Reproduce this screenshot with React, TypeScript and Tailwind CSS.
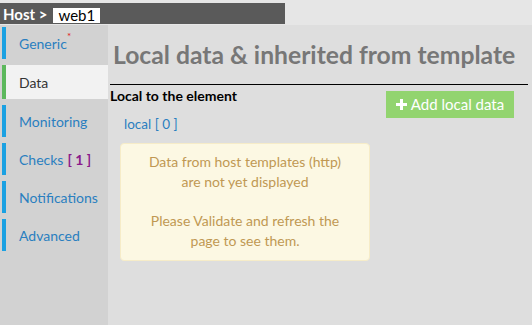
const items = [
  { label: 'Generic', star: true },
  { label: 'Data', active: true },
  { label: 'Monitoring' },
  { label: 'Checks', count: '[ 1 ]' },
  { label: 'Notifications' },
  { label: 'Advanced' },
];

export default function App() {
  return (
    <div className="w-[532px] h-[325px] overflow-hidden bg-[#dedede] font-['Lato',sans-serif] text-[14px] flex flex-col">
      {/* Top bar */}
      <div className="h-[25px] bg-[#e6e6e6] pt-[3px] flex">
        <div className="w-[285px] h-[21px] bg-[#5a5a5a] flex items-end pl-[3px] gap-[6px]">
          <span className="text-white font-bold text-[15px] leading-[20px]">Host &gt;</span>
          <span className="bg-white text-black px-[5px] h-[15px] leading-[15px] text-[15px] mb-[1px]">web1</span>
        </div>
      </div>

      <div className="flex flex-1">
        {/* Sidebar */}
        <div className="w-[108px] bg-[#d2d2d2] pt-[2px] flex flex-col gap-[6px]">
          {items.map((it) => (
            <div
              key={it.label}
              className={
                it.active
                  ? 'h-[34px] ml-[2px] bg-[#f2f2f2] border-l-[4px] border-[#5cb85c] flex items-center pl-[13px] text-[#333]'
                  : 'h-[32px] ml-[2px] border-l-[4px] border-[#1ba1e2] flex items-center pl-[13px] text-[#2a7fc0]'
              }
            >
              {it.label}
              {it.star && <sup className="text-[#e02020] text-[10px] -translate-y-[2px]">*</sup>}
              {it.count && <span className="ml-[4px] font-bold text-[#8a1a8a]">{it.count}</span>}
            </div>
          ))}
        </div>

        {/* Main */}
        <div className="flex-1 pl-[2px] pr-[4px]">
          <h1 className="text-[24.7px] font-bold text-[#777] leading-[30px] pl-[3px] mt-[15px]">
            Local data &amp; inherited from template
          </h1>
          <div className="border-t border-black mt-[14px] flex justify-between">
            <div>
              <div className="font-bold text-black leading-[18px] mt-[2px]">Local to the element</div>
              <div className="text-[#2a7fc0] text-[13.5px] pl-[14px] mt-[9px]">local [ 0 ]</div>
            </div>
            <button className="bg-[#92d46f] text-white text-[15px] w-[128px] h-[27px] mt-[6px] mr-[14px] flex items-center justify-center gap-[4px]">
              <svg width="11" height="11" viewBox="0 0 11 11">
                <path d="M4 0h3v4h4v3H7v4H4V7H0V4h4z" fill="white" />
              </svg>
              Add local data
            </button>
          </div>
          <div className="ml-[10px] mt-[9px] w-[250px] h-[118px] bg-[#fcf8e3] border border-[#f6ecc8] rounded-[4px] text-[#c09853] text-[14px] text-center leading-[20px] pt-[8px]">
            <p>Data from host templates (http)</p>
            <p>are not yet displayed</p>
            <p className="mt-[19px]">Please Validate and refresh the</p>
            <p>page to see them.</p>
          </div>
        </div>
      </div>
    </div>
  );
}
